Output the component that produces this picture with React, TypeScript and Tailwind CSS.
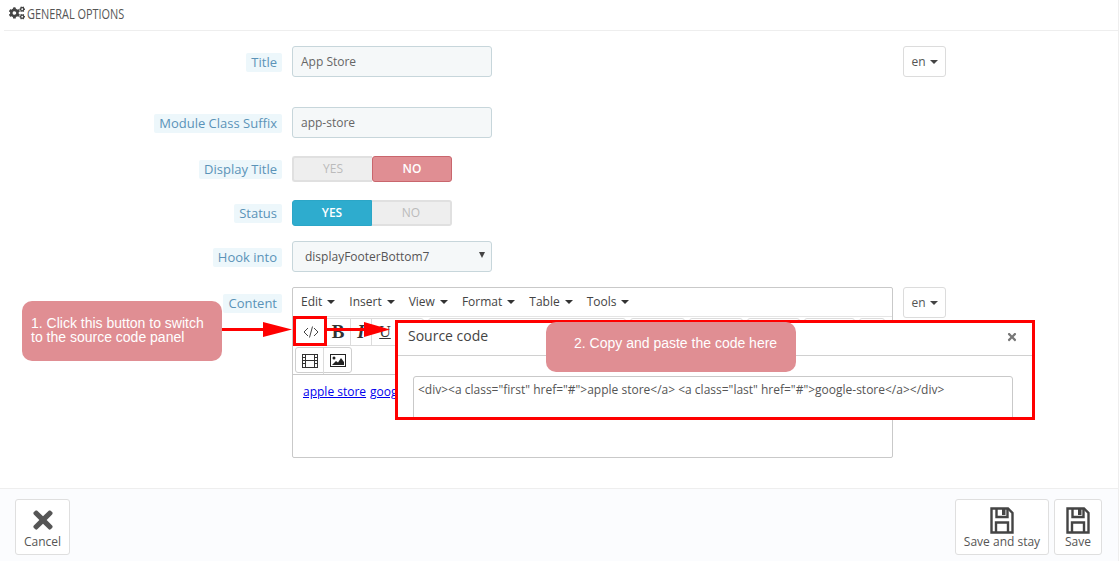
import { FaCogs, FaTimes } from 'react-icons/fa';

const sans = 'font-["Open_Sans",sans-serif]';

const Label = ({ text, toggle }: { text: string; toggle?: boolean }) => (
  <div className="w-[282px] flex justify-end shrink-0">
    <span className={`${toggle ? 'mt-[4px]' : 'mt-[7px]'} h-[19px] leading-[19px] px-[5px] rounded-[2px] bg-[#edf7fb] text-[13px] text-[#5b93b8]`}>{text}</span>
  </div>
);

const LangButton = () => (
  <button className="w-[43px] h-[31px] flex items-center justify-center gap-[4px] rounded-[3px] border border-[#dcdcdc] bg-white text-[12px] text-[#555]">
    en
    <span className="border-x-[4px] border-x-transparent border-t-[4px] border-t-[#444] mt-[1px]" />
  </button>
);

const Toggle = ({ yes }: { yes: boolean }) => {
  const off = 'w-[80px] flex items-center justify-center bg-[#eeeeee] border-2 border-[#e0e0e0] font-normal text-[#bbbbbb]';
  return (
    <div className="flex w-[160px] h-[26px] text-[12px] font-semibold">
      <div className={yes ? 'w-[80px] flex items-center justify-center rounded-l-[3px] bg-[#2eacce] border border-[#2ba6c7] text-white' : `${off} rounded-l-[3px] border-r-0`}>YES</div>
      <div className={yes ? `${off} rounded-r-[3px] border-l-0` : 'w-[80px] flex items-center justify-center rounded-[3px] bg-[#e08e93] border border-[#c9666d] text-white'}>NO</div>
    </div>
  );
};

const MenuItem = ({ text }: { text: string }) => (
  <span className="flex items-center gap-[5px] text-[12px] text-[#444]">
    {text}
    <span className="border-x-[4px] border-x-transparent border-t-[4px] border-t-[#333]" />
  </span>
);

const CodeIcon = () => (
  <svg width="16" height="12" viewBox="0 0 16 12" fill="none" stroke="#444" strokeWidth="1">
    <path d="M5 2 1 6l4 4M11 2l4 4-4 4M9.5 0.5l-3 11" />
  </svg>
);

const FilmIcon = () => (
  <svg width="16" height="14" viewBox="0 0 16 14" fill="none" stroke="#333" strokeWidth="1">
    <rect x="0.5" y="0.5" width="15" height="13" />
    <path d="M3.5 0.5v13M12.5 0.5v13M0.5 3.5h3M0.5 6.5h15M0.5 9.5h3M12.5 3.5h3M12.5 9.5h3" />
  </svg>
);

const ImageIcon = () => (
  <svg width="16" height="14" viewBox="0 0 16 14">
    <rect x="0.5" y="0.5" width="15" height="12" fill="#fff" stroke="#222" />
    <circle cx="4" cy="4" r="1.5" fill="#222" />
    <path d="M2 11 6 7l2 1.5L11 4l3 4v3z" fill="#222" />
  </svg>
);

const SaveIcon = () => (
  <svg width="24" height="27" viewBox="0 0 24 27" fill="none" stroke="#444" strokeWidth="2.4">
    <path d="M1.5 1.5H18l4.5 4.5v19.5h-21z" />
    <path d="M6.5 1.5v8.5h11V1.5M6 25.5V15.5h12v10" />
    <rect x="12" y="2" width="3.5" height="6" fill="#444" stroke="none" />
  </svg>
);

const ToolButton = ({ w, children }: { w: number; children?: React.ReactNode }) => (
  <div className="h-[26px] flex items-center justify-center border-r border-[#dcdcdc] last:border-r-0" style={{ width: w }}>
    {children}
  </div>
);

const ActionButton = ({ w, icon, text }: { w: string; icon: React.ReactNode; text: string }) => (
  <button className={`${w} h-[56px] flex flex-col items-center pt-[6px] rounded-[3px] border border-[#dfdfdf] bg-white text-[12px] leading-[16px] text-[#555]`}>
    <span className="h-[28px] flex items-center">{icon}</span>
    {text}
  </button>
);

export default function App() {
  return (
    <div className={`relative w-[1120px] h-[561px] overflow-hidden bg-white ${sans}`}>
      <div className="w-[1119px] h-[561px] border-r border-[#eeeeee]">
        <div className="ml-[4px] h-[31px] border-b border-[#eeeeee] flex items-center pl-[5px] pb-[4px] gap-[2px] text-[#555]">
          <FaCogs className="text-[16px] text-[#444] shrink-0" />
          <span className="text-[14px] scale-x-[0.78] origin-left whitespace-nowrap">GENERAL OPTIONS</span>
        </div>

        <div className="mt-[15px] flex gap-[10px]">
          <Label text="Title" />
          <div className="w-[200px] h-[31px] rounded-[3px] border border-[#c7d6db] bg-[#f5f8f9] px-[8px] flex items-center text-[12px] text-[#666]">App Store</div>
          <div className="ml-[401px]"><LangButton /></div>
        </div>

        <div className="mt-[30px] flex gap-[10px]">
          <Label text="Module Class Suffix" />
          <div className="w-[200px] h-[31px] rounded-[3px] border border-[#c7d6db] bg-[#f5f8f9] px-[8px] flex items-center text-[12px] text-[#666]">app-store</div>
        </div>

        <div className="mt-[18px] flex gap-[10px]">
          <Label text="Display Title" toggle />
          <Toggle yes={false} />
        </div>

        <div className="mt-[18px] flex gap-[10px]">
          <Label text="Status" toggle />
          <Toggle yes />
        </div>

        <div className="mt-[15px] flex gap-[10px]">
          <Label text="Hook into" />
          <div className="relative w-[200px] h-[31px] rounded-[3px] border border-[#c7d6db] bg-[#f5f8f9] pl-[12px] flex items-center text-[12px] text-[#555]">
            displayFooterBottom7
            <span className="absolute right-[6px] top-[10px] border-x-[3px] border-x-transparent border-t-[6px] border-t-[#444]" />
          </div>
        </div>

        <div className="mt-[15px] flex gap-[10px]">
          <Label text="Content" />
          <div className="w-[601px] h-[171px] rounded-[2px] border border-[#c9c9c9] bg-white flex flex-col">
            <div className="h-[29px] border-b border-[#e5e5e5] pl-[8px] flex items-center gap-[14px]">
              <MenuItem text="Edit" />
              <MenuItem text="Insert" />
              <MenuItem text="View" />
              <MenuItem text="Format" />
              <MenuItem text="Table" />
              <MenuItem text="Tools" />
            </div>
            <div className="pl-[2px] pt-[1px] flex gap-[4px]">
              <div className="flex h-[28px] w-[129px] rounded-[3px] border border-[#dcdcdc] overflow-hidden">
                <ToolButton w={30}><CodeIcon /></ToolButton>
                <ToolButton w={25}><span className='font-["Liberation_Serif",serif] font-bold text-[19px] text-[#333]'>B</span></ToolButton>
                <ToolButton w={21}><span className='font-["Liberation_Serif",serif] italic font-bold text-[19px] text-[#333]'>I</span></ToolButton>
                <ToolButton w={26}><span className='font-["Liberation_Serif",serif] underline text-[16px] text-[#333]'>U</span></ToolButton>
              </div>
              <div className="w-[198px] h-[28px] rounded-[3px] border border-[#dcdcdc]" />
              <div className="w-[55px] h-[28px] rounded-[3px] border border-[#dcdcdc]" />
              <div className="w-[54px] h-[28px] rounded-[3px] border border-[#dcdcdc]" />
              <div className="w-[53px] h-[28px] rounded-[3px] border border-[#dcdcdc]" />
              <div className="w-[51px] h-[28px] rounded-[3px] border border-[#dcdcdc]" />
              <div className="w-[26px] h-[28px] rounded-[3px] border border-[#dcdcdc]" />
            </div>
            <div className="pl-[2px] pt-[1px] pb-[1px]">
              <div className="flex w-[57px] h-[26px] rounded-[3px] border border-[#cfcfcf]">
                <ToolButton w={28}><FilmIcon /></ToolButton>
                <ToolButton w={27}><ImageIcon /></ToolButton>
              </div>
            </div>
            <div className="flex-1 border-t border-[#c9c9c9] pt-[9px] pl-[10px] text-[12px] leading-[16px] text-[#0000ee] underline flex gap-[4px]">
              <span>apple store</span>
              <span>google-store</span>
            </div>
          </div>
          <LangButton />
        </div>

        <div className="mt-[30px] h-[73px] border-t border-[#eeeeee] bg-[#fbfcfe] pt-[10px] pl-[15px] pr-[16px] flex">
          <ActionButton w="w-[55px]" icon={<FaTimes className="text-[28px] text-[#555]" />} text="Cancel" />
          <div className="ml-auto flex gap-[5px]">
            <ActionButton w="w-[94px]" icon={<SaveIcon />} text="Save and stay" />
            <ActionButton w="w-[48px]" icon={<SaveIcon />} text="Save" />
          </div>
        </div>
      </div>

      {/* annotations on top of the form */}
      <div className="absolute left-[395px] top-[320px] w-[640px] h-[100px] border-[3px] border-[#ff0000] bg-white overflow-hidden">
        <div className="h-[33px] border-b border-[#d0d0d0] pl-[10px] pb-[7px] flex items-center text-[14px] text-[#444]">Source code</div>
        <FaTimes className="absolute right-[14px] top-[8px] text-[12px] text-[#777]" />
        <div className="mt-[20px] ml-[15px] w-[600px] h-[60px] rounded-[3px] border border-[#c9c9c9] px-[4px] pt-[4px] text-[12px] text-[#555] whitespace-pre">{'<div><a class="first" href="#">apple store</a> <a class="last" href="#">google-store</a></div>'}</div>
      </div>

      <div className="absolute left-[293px] top-[316px] w-[34px] h-[30px] border-[3px] border-[#ff0000]" />

      <div className='absolute left-[22px] top-[301px] w-[200px] h-[60px] rounded-[10px] bg-[#e08e93] pl-[9px] pt-[15px] font-["Liberation_Sans",sans-serif] text-[14px] leading-[14px] text-white'>
        1. Click this button to switch
        <br />
        to the source code panel
      </div>

      <div className='absolute left-[546px] top-[322px] w-[250px] h-[50px] rounded-[10px] bg-[#e08e93] pl-[28px] pt-[13px] font-["Liberation_Sans",sans-serif] text-[14px] leading-[16px] text-white'>
        2. Copy and paste the code here
      </div>

      <svg className="absolute left-[220px] top-[320px]" width="172" height="20" viewBox="0 0 172 20" fill="#ff0000">
        <path d="M2 8h41V2l29 7.5-29 7.5v-6H2z" />
        <path d="M106 8h38V2l26 7.5-26 7.5v-6h-38z" />
      </svg>
    </div>
  );
}
